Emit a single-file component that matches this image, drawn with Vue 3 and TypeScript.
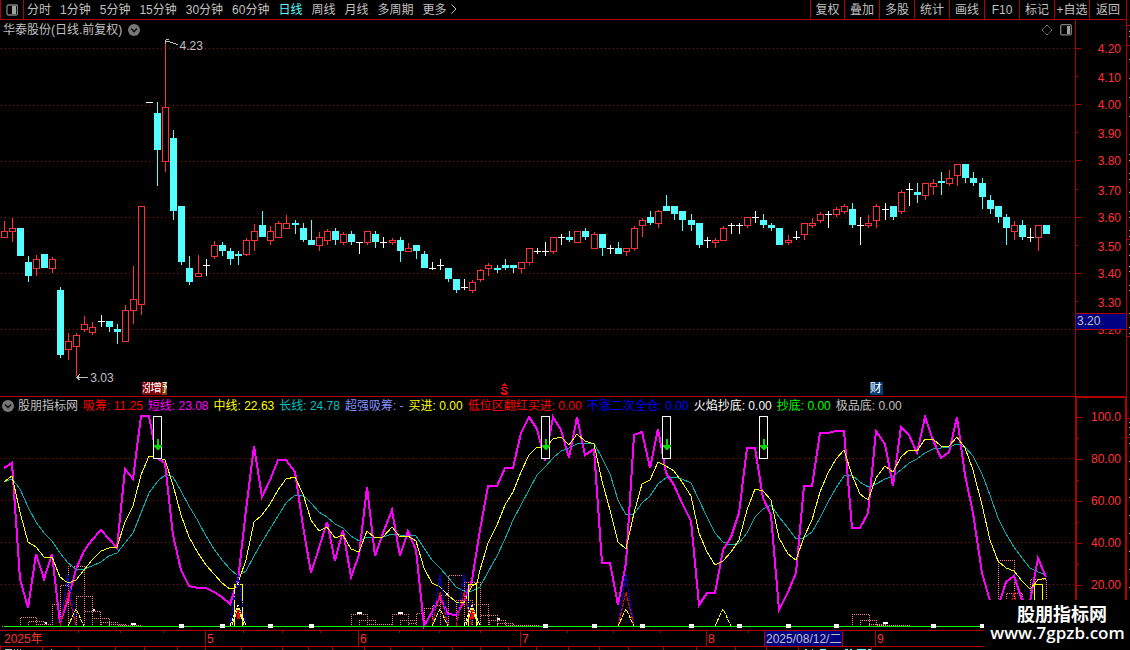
<script setup lang="ts">
import { ref } from 'vue'

type Kind = 'r' | 'c' | 'w'
type Candle = [Kind, number, number, number, number, number]

const periods = ['分时', '1分钟', '5分钟', '15分钟', '30分钟', '60分钟', '日线', '周线', '月线', '多周期', '更多']
const activePeriod = ref('日线')
const tools = ['复权', '叠加', '多股', '统计', '画线', 'F10', '标记', '+自选', '返回']

// kind (r = up, c = down, w = flat), x, high, body top, body bottom, low
const candles: Candle[] = [
  ['r', 4, 221, 231, 238, 238], ['r', 12, 218, 228, 232, 242], ['c', 20, 228, 228, 256, 256], ['c', 28, 256, 262, 276, 282],
  ['r', 36, 255, 259, 269, 276], ['c', 44, 254, 254, 268, 268], ['r', 52, 257, 259, 269, 273], ['c', 60, 287, 290, 355, 358],
  ['r', 68, 333, 341, 350, 360], ['r', 76, 333, 335, 347, 376], ['r', 84, 316, 324, 330, 332], ['r', 92, 322, 327, 333, 335],
  ['w', 101, 315, 321, 322, 327], ['c', 109, 321, 321, 327, 332], ['c', 117, 324, 329, 332, 344], ['r', 125, 305, 310, 342, 342],
  ['r', 133, 266, 299, 311, 324], ['r', 141, 206, 206, 305, 315], ['w', 149, 102, 102, 103, 103], ['c', 157, 102, 113, 150, 186],
  ['r', 165, 41, 107, 162, 172], ['c', 173, 130, 138, 211, 220], ['c', 181, 206, 206, 262, 265], ['c', 189, 256, 268, 282, 285],
  ['r', 198, 255, 273, 277, 277], ['w', 206, 259, 265, 266, 276], ['r', 214, 241, 245, 257, 259], ['c', 222, 242, 245, 251, 256],
  ['c', 230, 248, 251, 259, 265], ['c', 238, 251, 254, 256, 265], ['r', 246, 238, 240, 255, 256], ['r', 254, 224, 231, 241, 251],
  ['c', 262, 211, 225, 237, 237], ['r', 270, 226, 231, 241, 245], ['r', 278, 221, 223, 238, 238], ['r', 286, 215, 223, 229, 229],
  ['c', 295, 220, 223, 225, 234], ['c', 303, 223, 228, 240, 242], ['c', 311, 220, 240, 245, 245], ['r', 319, 232, 237, 246, 251],
  ['r', 327, 229, 231, 241, 245], ['c', 335, 228, 231, 240, 245], ['r', 343, 232, 234, 243, 245], ['c', 351, 231, 234, 242, 245],
  ['w', 359, 242, 242, 243, 254], ['r', 367, 231, 231, 243, 245], ['c', 375, 231, 234, 242, 248], ['w', 383, 237, 242, 243, 248],
  ['r', 392, 238, 240, 243, 245], ['c', 400, 237, 240, 251, 262], ['r', 408, 243, 248, 252, 252], ['c', 416, 245, 245, 251, 259],
  ['c', 424, 251, 254, 268, 268], ['w', 432, 262, 268, 269, 270], ['w', 440, 259, 265, 266, 270], ['c', 448, 268, 268, 279, 282],
  ['c', 456, 279, 279, 290, 293], ['w', 464, 279, 287, 288, 290], ['r', 472, 280, 282, 291, 293], ['r', 480, 269, 270, 280, 282],
  ['r', 488, 263, 265, 269, 276], ['c', 497, 265, 268, 270, 273], ['c', 505, 259, 265, 268, 270], ['c', 513, 265, 265, 268, 273],
  ['r', 521, 262, 262, 269, 273], ['r', 529, 248, 248, 263, 265], ['w', 537, 248, 251, 252, 254], ['w', 545, 242, 251, 252, 256],
  ['r', 553, 237, 237, 252, 254], ['w', 561, 234, 237, 238, 245], ['c', 569, 231, 237, 240, 242], ['r', 577, 231, 231, 243, 243],
  ['c', 585, 228, 231, 237, 240], ['r', 594, 232, 234, 249, 249], ['c', 602, 234, 234, 248, 256], ['w', 610, 245, 248, 249, 254],
  ['c', 618, 242, 248, 254, 254], ['r', 626, 248, 248, 252, 256], ['r', 634, 226, 228, 249, 251], ['r', 642, 218, 220, 226, 237],
  ['c', 650, 211, 217, 223, 225], ['r', 658, 210, 211, 224, 228], ['c', 666, 195, 206, 211, 211], ['c', 674, 206, 206, 214, 220],
  ['c', 682, 211, 211, 220, 231], ['c', 691, 214, 220, 225, 231], ['c', 699, 223, 223, 245, 248], ['w', 707, 237, 240, 241, 248],
  ['r', 715, 238, 240, 243, 248], ['r', 723, 226, 228, 241, 241], ['w', 731, 223, 225, 226, 234], ['w', 739, 223, 225, 226, 234],
  ['r', 747, 217, 217, 226, 228], ['w', 755, 211, 217, 218, 223], ['c', 763, 214, 220, 225, 228], ['c', 771, 223, 225, 228, 231],
  ['c', 779, 228, 228, 245, 245], ['r', 788, 235, 240, 243, 245], ['w', 796, 231, 237, 238, 240], ['r', 804, 223, 223, 235, 240],
  ['r', 812, 218, 223, 226, 228], ['r', 820, 212, 214, 221, 223], ['w', 828, 211, 214, 215, 228], ['r', 836, 207, 209, 215, 217],
  ['r', 844, 204, 206, 212, 214], ['c', 852, 203, 209, 225, 228], ['w', 860, 217, 225, 226, 245], ['r', 868, 215, 223, 226, 228],
  ['r', 876, 204, 206, 221, 228], ['w', 885, 203, 209, 210, 220], ['c', 893, 206, 206, 217, 220], ['r', 901, 190, 192, 212, 214],
  ['w', 909, 183, 189, 190, 206], ['c', 917, 183, 192, 195, 203], ['r', 925, 183, 183, 196, 200], ['r', 933, 179, 183, 187, 195],
  ['c', 941, 172, 181, 183, 195], ['r', 949, 170, 178, 184, 186], ['r', 957, 164, 164, 176, 186], ['c', 965, 164, 164, 178, 183],
  ['c', 973, 172, 178, 183, 186], ['c', 982, 178, 183, 197, 209], ['c', 990, 195, 200, 209, 214], ['c', 998, 206, 206, 217, 223],
  ['c', 1006, 214, 217, 228, 245], ['r', 1014, 221, 225, 232, 240], ['c', 1022, 220, 225, 237, 240], ['w', 1030, 228, 237, 238, 242],
  ['r', 1038, 225, 225, 238, 251], ['c', 1046, 225, 225, 234, 234],
]

const priceGrid = [48, 105, 161, 217, 273, 329]
const priceScale = ['4.20', '4.10', '4.00', '3.90', '3.80', '3.70', '3.60', '3.50', '3.40', '3.30', '3.20']
const levelGrid = [458, 500, 542, 584]
const levelScale = ['100.0', '', '80.00', '', '60.00', '', '40.00', '', '20.00']

const legend = [
  { name: '吸筹', value: '11.25', tone: 'red' },
  { name: '短线', value: '23.08', tone: 'magenta' },
  { name: '中线', value: '22.63', tone: 'yellow' },
  { name: '长线', value: '24.78', tone: 'teal' },
  { name: '超强吸筹', value: '-', tone: 'violet' },
  { name: '买进', value: '0.00', tone: 'yellow' },
  { name: '低位区翻红买进', value: '0.00', tone: 'red' },
  { name: '不涨二次全仓', value: '0.00', tone: 'blue' },
  { name: '火焰抄底', value: '0.00', tone: 'white' },
  { name: '抄底', value: '0.00', tone: 'green' },
  { name: '极品底', value: '0.00', tone: 'grey' },
]

const shortLine = '4,468 12,463 20,579 28,608 36,554 44,579 52,554 60,623 68,600 76,569 84,551 92,540 101,530 109,539 117,548 125,469 133,479 141,416 149,416 157,458 165,463 173,535 181,570 189,586 198,588 206,588 214,592 222,597 230,604 238,580 246,510 254,446 262,497 270,480 278,460 286,460 295,472 303,526 311,573 319,548 327,522 335,561 343,530 351,577 359,555 367,487 375,556 383,533 392,510 400,556 408,531 416,550 424,626 432,612 440,597 448,614 456,615 464,602 472,580 480,530 488,486 497,486 505,468 513,468 521,433 529,417 537,429 545,461 553,417 561,430 569,458 577,417 585,455 594,449 602,563 610,563 618,605 626,563 634,435 642,432 650,468 658,429 666,473 674,485 682,503 691,521 699,605 707,593 715,593 723,550 731,537 739,513 747,448 755,448 763,498 771,515 779,610 788,592 796,573 804,486 812,486 820,433 828,433 836,431 844,431 852,528 860,528 868,513 876,431 885,444 893,486 901,427 909,435 917,453 925,417 933,440 941,458 949,452 957,417 965,475 973,513 982,573 990,601 998,607 1006,582 1014,576 1022,600 1030,602 1038,558 1046,577'
const midLine = '4,482 12,476 20,512 28,542 36,547 44,557 52,557 60,577 68,583 76,580 84,570 92,560 101,551 109,548 117,547 125,522 133,506 141,475 149,456 157,457 165,460 173,485 181,515 189,537 198,553 206,565 214,574 222,583 230,589 235,588 238,583 246,560 254,522 262,515 270,504 278,490 286,479 295,477 303,494 311,520 319,531 327,527 335,538 343,535 351,549 359,552 367,531 375,538 383,537 392,527 400,537 408,536 416,541 424,568 432,583 440,587 448,595 456,602 464,603 472,586 477,583 480,570 488,543 497,525 505,505 513,492 521,472 529,455 537,447 545,448 553,439 561,437 569,445 577,434 585,441 594,444 602,481 610,510 618,542 626,549 634,513 642,484 650,480 658,462 666,466 674,471 682,482 691,496 699,533 707,552 715,565 723,561 731,552 739,540 747,510 755,489 763,491 771,500 779,538 788,554 796,560 804,537 812,520 820,492 828,473 836,459 844,450 852,475 860,494 868,500 876,478 885,466 893,472 901,457 909,450 917,451 925,439 933,439 941,446 949,446 957,437 965,448 973,470 982,505 990,540 998,561 1006,568 1014,571 1022,581 1030,589 1038,580 1046,578'
const longLine = '4,482 12,479 20,489 28,507 36,522 44,533 52,541 60,553 68,563 76,569 84,569 92,566 101,562 109,556 117,553 125,543 133,533 141,513 149,493 158,481 166,474 173,477 181,491 189,506 198,521 206,536 214,549 222,560 230,569 238,576 246,571 254,556 262,542 270,529 278,516 286,503 295,495 303,495 311,503 319,512 327,517 335,524 343,528 351,536 359,541 367,537 383,537 392,534 400,535 416,536 424,548 432,560 440,568 448,577 456,587 464,591 472,591 480,587 488,572 497,556 505,539 513,520 521,505 529,490 537,475 545,467 553,458 561,451 569,448 577,444 594,443 602,458 610,474 618,500 626,515 634,514 642,503 650,496 658,484 666,478 674,477 682,479 691,483 699,500 707,517 715,533 723,542 731,545 739,543 747,533 755,517 763,509 771,505 779,517 788,528 796,539 804,538 812,532 820,518 828,502 836,488 844,476 852,475 860,482 868,487 876,484 885,479 893,476 901,470 909,463 917,459 925,453 933,449 941,448 949,447 957,444 965,447 973,456 982,474 990,495 998,518 1006,534 1014,547 1022,558 1030,568 1038,572 1046,575'

// left, right, top
const chipBoxes: number[][] = [
  [20, 36, 617], [28, 44, 621], [36, 52, 624], [52, 60, 604], [60, 68, 585], [68, 84, 566], [76, 92, 596], [84, 100, 611],
  [92, 109, 618], [101, 117, 622], [109, 125, 624], [117, 141, 625],
  [351, 367, 614], [359, 375, 620], [367, 391, 624], [392, 408, 614], [400, 416, 620], [408, 416, 623], [416, 424, 613],
  [424, 432, 608], [432, 440, 605], [440, 448, 595], [448, 464, 575], [456, 472, 600], [464, 480, 582], [472, 488, 604],
  [480, 497, 615], [489, 505, 620], [497, 513, 623], [505, 538, 625],
  [852, 869, 614], [860, 876, 620], [869, 885, 624], [876, 910, 625], [998, 1014, 560], [1006, 1022, 593], [1030, 1046, 579],
]

// colour, centre x, apex y
const spikes: [string, number, number][] = [
  ['blue', 68, 575], ['red', 68, 592], ['yellow', 76, 609],
  ['blue', 238, 575], ['white', 238, 605],
  ['blue', 440, 575], ['red', 440, 592], ['yellow', 440, 609],
  ['blue', 464, 575], ['red', 464, 592], ['white', 472, 605],
  ['blue', 626, 575], ['red', 626, 592], ['yellow', 626, 609], ['yellow', 723, 609], ['red', 1014, 592],
]
const flames = [238, 472]
const buyBoxes = [234, 468, 1034]
const sellBoxes = [153, 541, 662, 759]
const marks: number[][] = [
  ...[181, 222, 270, 311, 545, 594, 642, 691, 739, 788, 836, 933, 982].map((x) => [x - 2, 624, 5, 4]),
  [131, 623, 5, 2], [45, 622, 2, 2], [93, 609, 2, 2], [357, 612, 5, 2], [398, 612, 5, 2], [446, 593, 2, 2], [497, 618, 3, 2], [883, 622, 5, 2],
]

const months = ['2025年', '5', '6', '7', '8', '2025/08/12/二', '', '9']
const weekTicks = [78, 120, 163, 243, 282, 320, 399, 439, 480, 567, 613, 660, 748]
const stripTicks = [0, 42, 78, 115, 144, 177, 205, 241, 282, 308, 332, 364, 390, 422, 452, 480, 508, 536, 568, 599, 628, 663, 696, 735, 766, 798, 871]
const stripDots: number[][] = [[5, 6], [8, 1], [11, 1], [14, 1], [17, 1], [20, 1], [51, 1]]
const stripCyan: number[][] = [[805, 2], [812, 1], [820, 6], [845, 3], [850, 2], [857, 9], [868, 3]]
const edgeRed = [25, 45, 239, 336, 418, 437]
const edgeDots = [31, 36, 59, 78, 97, 116, 154, 160, 173, 179, 192, 211, 217, 230, 236, 244, 255, 266, 271, 285, 290, 313, 327, 333, 422, 427, 434, 443, 461, 479, 497, 515, 533, 551, 569, 587]

const spikePath = (x: number, y: number) => `${x - 8},626 ${x},${y} ${x + 8},626`
</script>

<template>
  <div class="terminal">
    <div class="main">
      <header class="toolbar">
        <button class="dock" aria-label="侧栏">
          <svg width="12" height="12" viewBox="0 0 12 12"><rect x="1" y="1" width="10.5" height="10" rx="1.5" fill="none" stroke="#808080" stroke-width="1.3" /><rect x="6" y="2" width="4" height="8" fill="#a0a0a0" /></svg>
        </button>
        <nav class="periods">
          <button v-for="p in periods" :key="p" :class="{ active: p === activePeriod }" @click="activePeriod = p">
            {{ p }}<svg v-if="p === '更多'" class="more" width="6" height="10" viewBox="0 0 6 10"><path d="M.5 .5 5 5 .5 9.5" fill="none" stroke="#c0c0c0" /></svg>
          </button>
        </nav>
        <div class="tools">
          <button v-for="t in tools" :key="t">{{ t }}</button>
        </div>
      </header>

      <section class="price">
        <div class="plot">
          <svg class="canvas" viewBox="0 20 1075 376" preserveAspectRatio="none" shape-rendering="crispEdges">
            <line v-for="y in priceGrid" :key="y" class="grid" x1="1" x2="1075" :y1="y + 0.5" :y2="y + 0.5" />
            <g v-for="([k, x, hi, top, bot, lo], i) in candles" :key="i" :class="'k-' + k">
              <rect v-if="top > hi" :x="x" :y="hi" width="1" :height="top - hi" />
              <rect v-if="lo > bot" :x="x" :y="bot" width="1" :height="lo - bot" />
              <rect v-if="k === 'r'" class="hollow" :x="x - 2.5" :y="top + 0.5" width="6" :height="bot - top - 1" />
              <rect v-else :x="x - 3" :y="top" width="7" :height="bot - top" />
            </g>
            <path class="pointer" d="M166 41.500 H170 M170 42.500 H173 M173 43.500 H176 M176 44.500 H178 M166 39.500 H169 M165.500 40 V44 M76 377.500 H88 M77 376.500 H79 M79 374.500 H80 M78 375.500 H79 M77 378.500 H79 M78 379.500 H80" />
          </svg>
          <h1 class="title">
            华泰股份(日线.前复权)
            <svg width="12" height="12" viewBox="0 0 12 12"><circle cx="6" cy="6" r="6" fill="#777" /><path d="M3 4.500 6 7.500 9 4.500" fill="none" stroke="#111" stroke-width="1.600" /></svg>
          </h1>
          <div class="corner">
            <svg width="12" height="12" viewBox="0 0 12 12"><path d="M6 1 11 6 6 11 1 6Z" fill="none" stroke="#999" stroke-dasharray="1.200 .6" /></svg>
            <svg width="12" height="12" viewBox="0 0 12 12"><rect x=".7" y=".7" width="10.600" height="10.200" rx="1.500" fill="none" stroke="#808080" stroke-width="1.300" /><rect x="7" y="2" width="3" height="8" fill="#a0a0a0" /></svg>
          </div>
          <span class="note high">4.23</span>
          <span class="note low">3.03</span>
          <span class="events"><b class="rise">涨</b><b class="add">增</b><b class="fore">预</b></span>
          <svg class="dollar" width="7" height="12" viewBox="0 0 7 12" shape-rendering="crispEdges"><path d="M3 0h1v1h1v1h1v1H1V2h1V1h1zM1 4h5v1h1v1H5V5H2v1h1v1h2v1h1v1h1v2H6v1H1v-1H0V9h2v1h3V9H4V8H2V7H1V6H0V5h1z" fill="#f00" /></svg>
          <b class="report">财</b>
        </div>
        <div class="scale price-scale">
          <span v-for="v in priceScale" :key="v">{{ v }}</span>
          <output class="cursor-price">3.20</output>
        </div>
      </section>

      <section class="indicator">
        <div class="plot">
          <svg class="canvas" viewBox="0 397 1075 233" preserveAspectRatio="none" shape-rendering="crispEdges">
            <line v-for="y in levelGrid" :key="y" class="grid" x1="1" x2="1075" :y1="y + 0.5" :y2="y + 0.5" />
            <path v-for="([l, r, t], i) in chipBoxes" :key="'b' + i" class="chip" :d="`M${l + 0.5} 626.5V${t + 0.5}H${r + 0.5}V626.5`" />
            <polyline class="teal-line" :points="longLine" />
            <polyline class="magenta-line" :points="shortLine" />
            <polyline class="yellow-line" :points="midLine" />
            <rect v-for="x in buyBoxes" :key="'y' + x" class="buy" :x="x + 0.5" y="584.5" width="8" height="42" />
            <polyline v-for="([c, x, y], i) in spikes" :key="'s' + i" :class="['spike', c]" :points="spikePath(x, y)" />
            <g v-for="x in flames" :key="'f' + x">
              <polyline class="spike yellow solid" :points="`${x - 6},625 ${x},608 ${x + 6},625`" />
              <path :d="`M${x - 3} 613h7v1h-2v5h-3v-5h-2z M${x - 1} 610h3v2h-3z`" fill="#f00" />
            </g>
            <rect class="base" x="4" y="626" width="1071" height="1" />
            <rect x="2" y="626" width="1" height="1" fill="#f77" />
            <rect v-for="([x, y, w, h], i) in marks" :key="'m' + i" :x="x" :y="y" :width="w" :height="h" fill="#fff" />
            <g v-for="x in sellBoxes" :key="'w' + x">
              <rect class="sell" :x="x + 0.5" y="416.5" width="8" height="42" />
              <path class="arrow" :d="`M${x + 4} 439h2v6h3v1l-4 5l-4 -5v-1h3z`" />
            </g>
          </svg>
          <div class="legend">
            <h2>
              <svg width="12" height="12" viewBox="0 0 12 12"><circle cx="6" cy="6" r="6" fill="#777" /><path d="M3 4.500 6 7.500 9 4.500" fill="none" stroke="#111" stroke-width="1.600" /></svg>
              股朋指标网
            </h2>
            <span v-for="l in legend" :key="l.name" :class="'t-' + l.tone">{{ l.name }}: {{ l.value }}</span>
          </div>
        </div>
        <div class="scale level-scale">
          <span v-for="(v, i) in levelScale" :key="i">{{ v }}</span>
        </div>
      </section>

      <div class="dates">
        <svg class="canvas" viewBox="0 630 1126 17" preserveAspectRatio="none" shape-rendering="crispEdges">
          <rect v-for="x in weekTicks" :key="x" :x="x" y="630" width="1" height="3" fill="#b00000" />
        </svg>
        <span v-for="(m, i) in months" :key="i" :class="{ cursor: i === 5 }">{{ m }}</span>
      </div>
      <svg class="strip" viewBox="0 647 1126 3" preserveAspectRatio="none" shape-rendering="crispEdges">
        <rect v-for="x in stripTicks" :key="x" :x="x" y="647" width="1" height="3" fill="#b00000" />
        <rect v-for="[x, w] in stripDots" :key="'d' + x" :x="x" y="649" :width="w" height="1" fill="#c0c0c0" />
        <rect v-for="[x, w] in stripCyan" :key="'c' + x" :x="x" y="649" :width="w" height="1" fill="#54ffff" />
      </svg>
    </div>

    <svg class="edge" viewBox="0 0 3 650" preserveAspectRatio="none" shape-rendering="crispEdges">
      <rect v-for="y in edgeRed" :key="y" x="0" :y="y" width="3" height="1" fill="#b00000" />
      <rect v-for="y in edgeDots" :key="'e' + y" x="2" :y="y" width="1" height="1" fill="#c0c0c0" />
    </svg>

    <a class="brand" href="#">
      <strong>股朋指标网</strong>
      <span>www.7gpzb.com</span>
    </a>
  </div>
</template>

<style>
html,
body {
  margin: 0;
  background: #000;
}
</style>

<style scoped>
.terminal {
  position: relative;
  display: grid;
  grid-template-columns: 1fr 4px;
  height: 100vh;
  min-height: 400px;
  overflow: hidden;
  background: #000;
  color: #c0c0c0;
  font: 12px/16px "Liberation Sans", "Noto Sans CJK SC", sans-serif;
}
.main {
  display: grid;
  grid-template-rows: 20px minmax(0, 377fr) minmax(0, 233fr) 17px 3px;
  min-width: 0;
}
.edge {
  width: 100%;
  height: 100%;
  border-left: 1px solid #b00000;
  box-sizing: border-box;
}
button {
  padding: 0;
  border: 0;
  background: none;
  color: inherit;
  font: inherit;
  white-space: nowrap;
}
.toolbar {
  display: flex;
  box-sizing: border-box;
  border-bottom: 1px solid #b00000;
  border-left: 1px solid #b00000;
}
.dock {
  display: flex;
  justify-content: center;
  align-items: center;
  width: 23px;
  border-right: 1px solid #b00000;
}
.periods {
  display: flex;
  flex: 1;
  gap: 9px;
  padding-left: 3px;
  overflow: hidden;
}
.periods .active {
  color: #54ffff;
}
.more {
  margin-left: 4px;
}
.tools {
  display: flex;
}
.tools button {
  box-sizing: border-box;
  width: 35px;
  border-left: 1px solid #b00000;
}
.tools button:first-child {
  width: 34px;
}
.tools button:last-child {
  width: 37px;
}
.price,
.indicator {
  display: grid;
  grid-template-columns: 1fr 51px;
  min-height: 0;
}
.price {
  border-bottom: 1px solid #b00000;
}
.plot {
  position: relative;
  min-width: 0;
  min-height: 0;
  overflow: hidden;
}
.canvas {
  position: absolute;
  inset: 0;
  width: 100%;
  height: 100%;
}
.grid {
  stroke: #a00000;
  stroke-dasharray: 1 3;
}
.k-r {
  fill: #ff3232;
}
.k-c {
  fill: #54ffff;
}
.k-w {
  fill: #fff;
}
.hollow {
  fill: #000;
  stroke: #ff3232;
}
.pointer {
  fill: none;
  stroke: #c0c0c0;
}
.title {
  position: relative;
  display: flex;
  align-items: center;
  gap: 6px;
  margin: 0;
  padding: 2px 3px;
  font: inherit;
}
.corner {
  position: absolute;
  top: 4px;
  right: 3px;
  display: flex;
  gap: 7px;
}
.note {
  position: absolute;
}
.high {
  left: 16.7%;
  top: 4.7%;
}
.low {
  left: 8.4%;
  top: 93.2%;
}
.events,
.report {
  position: absolute;
  bottom: 1px;
  height: 13px;
  line-height: 13px;
  color: #fff;
}
.events {
  left: 13.2%;
  display: flex;
}
.events b,
.report {
  font-weight: 400;
  overflow: hidden;
}
.rise {
  width: 8px;
  background: #800000;
}
.add {
  width: 12px;
  background: #800000;
}
.fore {
  width: 5px;
  background: #804000;
}
.report {
  left: 80.9%;
  width: 13px;
  background: #003c78;
}
.dollar {
  position: absolute;
  left: 46.6%;
  bottom: 1px;
}
.scale {
  position: relative;
  display: flex;
  flex-direction: column;
  box-sizing: border-box;
  border-left: 1px solid #b00000;
  color: #ff3232;
  min-height: 0;
}
.scale span {
  position: relative;
  display: flex;
  flex: 1;
  align-items: center;
  justify-content: flex-end;
  box-sizing: border-box;
  min-height: 0;
}
.scale span::before {
  content: "";
  position: absolute;
  left: 0;
  top: 50%;
  width: 5px;
  height: 1px;
  background: #b00000;
}
.scale span:nth-child(even)::before {
  width: 2px;
}
.price-scale {
  padding: 14px 5px 53px 0;
}
.price-scale span {
  padding-top: 2px;
}
.price-scale span:nth-child(even) {
  padding-top: 4px;
}
.cursor-price {
  position: absolute;
  left: 0;
  right: 0;
  top: 77.9%;
  box-sizing: border-box;
  height: 17px;
  padding-left: 1px;
  border: solid #b00000;
  border-width: 1px 0;
  background: #000080;
  color: #c0c0c0;
  line-height: 15px;
}
.level-scale {
  border-left-width: 2px;
  border-right: 1px solid #b00000;
  border-top: 1px solid #b00000;
  padding: 8px 4px 35px 0;
}
.chip {
  fill: none;
  stroke: #ff8080;
  stroke-dasharray: 1 1;
  stroke-dashoffset: 0.5;
}
.teal-line,
.yellow-line,
.magenta-line {
  fill: none;
}
.teal-line {
  stroke: #00b4b4;
}
.yellow-line {
  stroke: #ffff00;
}
.magenta-line {
  stroke: #ff00ff;
  stroke-width: 2;
}
.buy {
  fill: none;
  stroke: #ffff00;
}
.spike {
  fill: none;
  stroke-dasharray: 4 1;
}
.spike.solid {
  stroke-dasharray: none;
}
.blue {
  stroke: #0000ff;
}
.red {
  stroke: #ff0000;
}
.yellow {
  stroke: #ffff00;
}
.white {
  stroke: #fff;
}
.base {
  fill: #00ff00;
}
.sell {
  fill: #000;
  stroke: #fff;
}
.arrow {
  fill: #00d800;
}
.legend {
  position: relative;
  display: flex;
  gap: 5px;
  padding: 1px 0 0 2px;
  white-space: nowrap;
}
.legend h2 {
  display: flex;
  align-items: center;
  gap: 4px;
  margin: 0;
  font: inherit;
}
.t-red {
  color: #ff0000;
}
.t-magenta {
  color: #ff00ff;
}
.t-yellow {
  color: #ffff00;
}
.t-teal {
  color: #00c0c0;
}
.t-violet {
  color: #8090ff;
}
.t-blue {
  color: #0000ff;
}
.t-white {
  color: #fff;
}
.t-green {
  color: #00ff00;
}
.dates {
  position: relative;
  display: grid;
  grid-template-columns: 205fr 153fr 162fr 186fr 58fr 78fr 33fr 251fr;
  box-sizing: border-box;
  border: solid #b00000;
  border-width: 1px 0;
  color: #ff3232;
  line-height: 16px;
}
.dates .canvas {
  top: -1px;
  height: 17px;
}
.dates span {
  height: 15px;
  box-sizing: border-box;
  min-width: 0;
  padding-left: 1px;
  border-left: 1px solid #b00000;
  white-space: nowrap;
}
.dates span:first-of-type {
  padding-left: 4px;
  border-left: 0;
}
.dates .cursor {
  background: #000080;
  color: #c0c0c0;
}
.strip {
  width: 100%;
  height: 100%;
}
.brand {
  position: absolute;
  right: 0;
  bottom: 0;
  display: flex;
  flex-direction: column;
  align-items: center;
  box-sizing: border-box;
  width: 146px;
  height: 50px;
  padding: 3px 0 0 10px;
  background: #000;
  color: #fff;
  text-decoration: none;
}
.brand strong {
  font: 700 18px/20px "Noto Sans CJK SC", sans-serif;
}
.brand span {
  margin-right: 9px;
  font: 600 17px/19px "Open Sans", "Noto Sans", sans-serif;
}
</style>
